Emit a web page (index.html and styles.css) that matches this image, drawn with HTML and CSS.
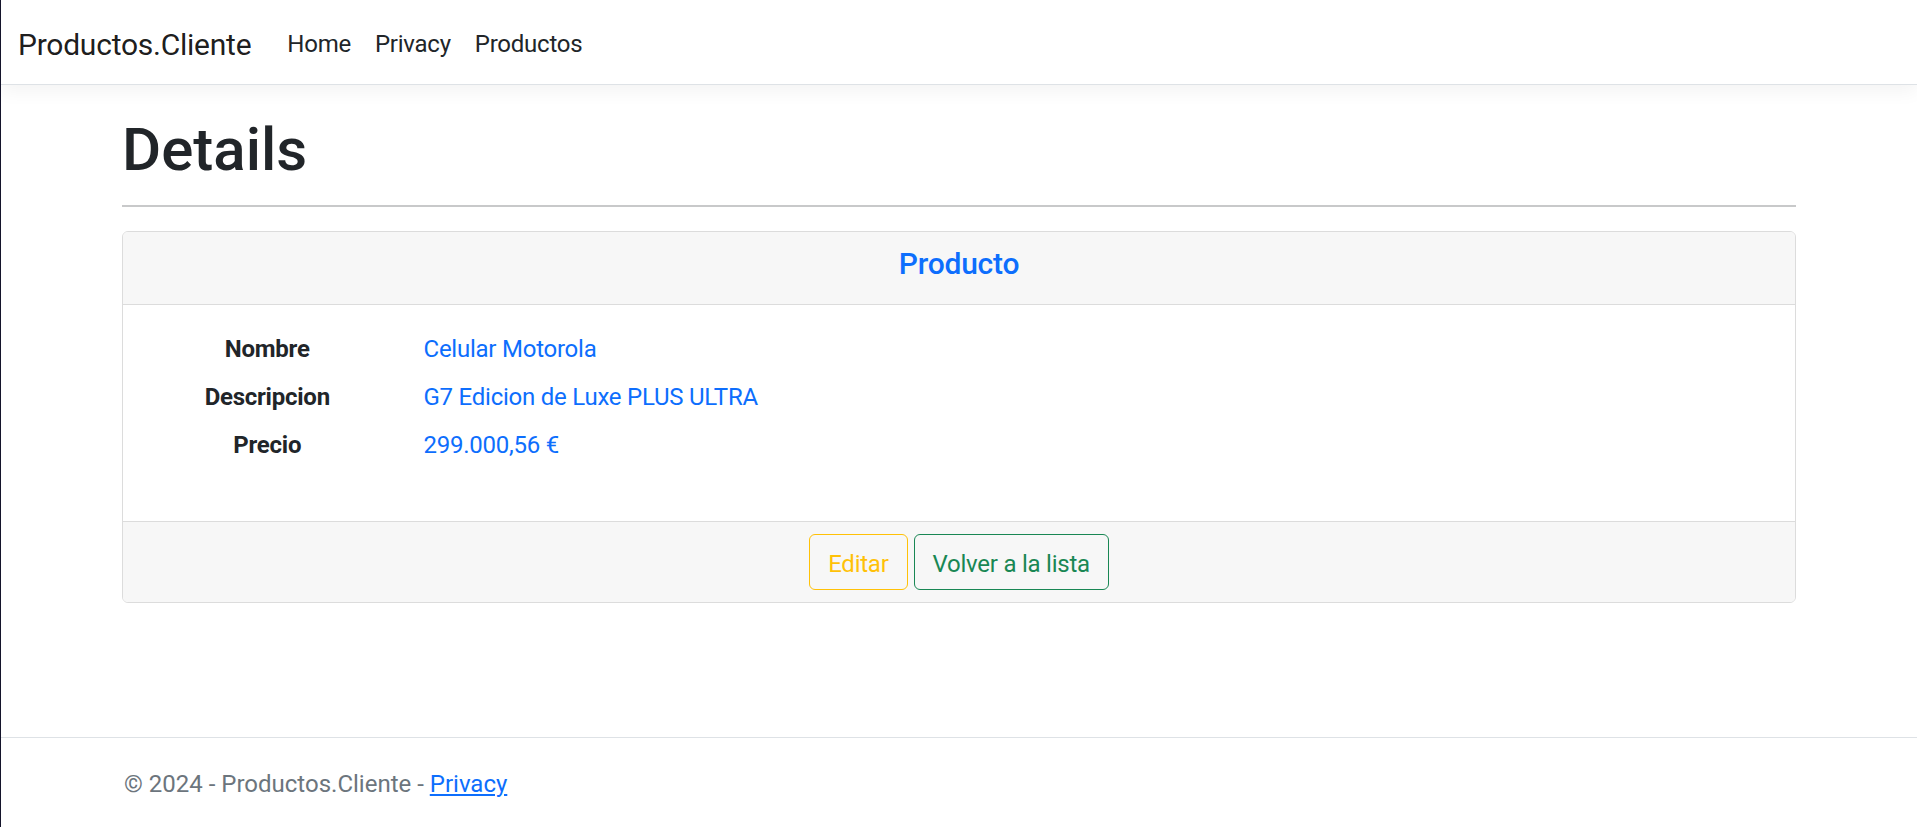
FILE: index.html
```html
<!DOCTYPE html>
<html lang="es">
<head>
<meta charset="utf-8">
<title>Details - Productos.Cliente</title>
<link rel="stylesheet" href="styles.css">
</head>
<body>
<header class="navbar">
  <a class="brand" href="#">Productos.Cliente</a>
  <nav class="nav">
    <a class="nav-link" href="#">Home</a>
    <a class="nav-link" href="#">Privacy</a>
    <a class="nav-link" href="#">Productos</a>
  </nav>
</header>
<main class="container">
  <h1 class="title">Details</h1>
  <hr class="divider">
  <section class="card">
    <div class="card-header">
      <h5 class="card-title">Producto</h5>
    </div>
    <div class="card-body">
      <dl class="details">
        <dt>Nombre</dt>
        <dd>Celular Motorola</dd>
        <dt>Descripcion</dt>
        <dd>G7 Edicion de Luxe PLUS ULTRA</dd>
        <dt>Precio</dt>
        <dd>299.000,56 €</dd>
      </dl>
    </div>
    <div class="card-footer">
      <a class="btn btn-warning" href="#">Editar</a>
      <a class="btn btn-success" href="#">Volver a la lista</a>
    </div>
  </section>
</main>
<footer class="footer">
  <div class="container footer-inner">© 2024 - Productos.Cliente - <a class="footer-link" href="#">Privacy</a></div>
</footer>
</body>
</html>
```

FILE: styles.css
```css
* { box-sizing: border-box; }
html {
  height: 100%;
  border-left: 1px solid #14142b;
}
body {
  margin: 0;
  min-height: 100%;
  position: relative;
  font-family: "Segoe UI", Roboto, "Noto Sans", sans-serif;
  font-size: 24px;
  line-height: 1.5;
  letter-spacing: -0.01em;
  color: #212529;
  background: #fff;
}
a { text-decoration: none; }

.navbar {
  display: flex;
  align-items: center;
  height: 85px;
  padding: 4px 18px 0 17px;
  border-bottom: 1px solid #dee2e6;
  box-shadow: 0 6px 18px rgba(0, 0, 0, 0.05);
  background: #fff;
  margin-bottom: 24px;
}
.brand {
  font-size: 30px;
  line-height: 45px;
  color: rgba(0, 0, 0, 0.9);
  margin-right: 24px;
}
.nav { display: flex; }
.nav-link {
  color: #212529;
  padding: 0 12px;
  line-height: 36px;
}

.container {
  width: 1710px;
  margin: 0 auto;
  padding: 0 18px;
}
.title {
  margin: 0;
  padding-top: 5px;
  font-size: 60px;
  line-height: 72px;
  font-weight: 500;
  letter-spacing: 0;
}
.divider {
  margin: 19px 0 24px;
  border: 0;
  border-top: 2px solid #c8c9ca;
}

.card {
  border: 1px solid #dcdcdc;
  border-radius: 6px;
  overflow: hidden;
}
.card-header {
  background: #f7f7f7;
  border-bottom: 1px solid #dcdcdc;
  padding: 14px 24px 10px;
  text-align: center;
}
.card-title {
  margin: 0 0 12px;
  font-size: 30px;
  line-height: 36px;
  font-weight: 500;
  color: #0d6efd;
}
.card-body { padding: 24px; }
.details {
  display: grid;
  grid-template-columns: 276.5px 1fr;
  margin: 0 -18px 24px;
}
.details dt {
  font-weight: 700;
  text-align: center;
  padding: 2px 18px 0;
}
.details dd {
  margin: 0 0 10px;
  padding: 2px 18px 0;
  color: #0d6efd;
}
.card-footer {
  background: #f7f7f7;
  border-top: 1px solid #dcdcdc;
  padding: 12px 24px;
  display: flex;
  justify-content: center;
  gap: 6px;
}
.btn {
  display: inline-block;
  padding: 11px 18px 7px;
  border: 1px solid;
  border-radius: 6px;
  line-height: 36px;
  font-size: 24px;
}
.btn-warning { color: #ffc107; border-color: #ffc107; }
.btn-success { color: #198754; border-color: #198754; }

.footer {
  position: absolute;
  left: 0;
  right: 0;
  bottom: 0;
  border-top: 1px solid #dee2e6;
  padding-top: 3px;
  line-height: 86px;
  white-space: nowrap;
  color: #6c757d;
  letter-spacing: 0;
}
.footer-inner { padding-left: 20px; }
.footer-link {
  color: #0d6efd;
  text-decoration: underline;
}
```
